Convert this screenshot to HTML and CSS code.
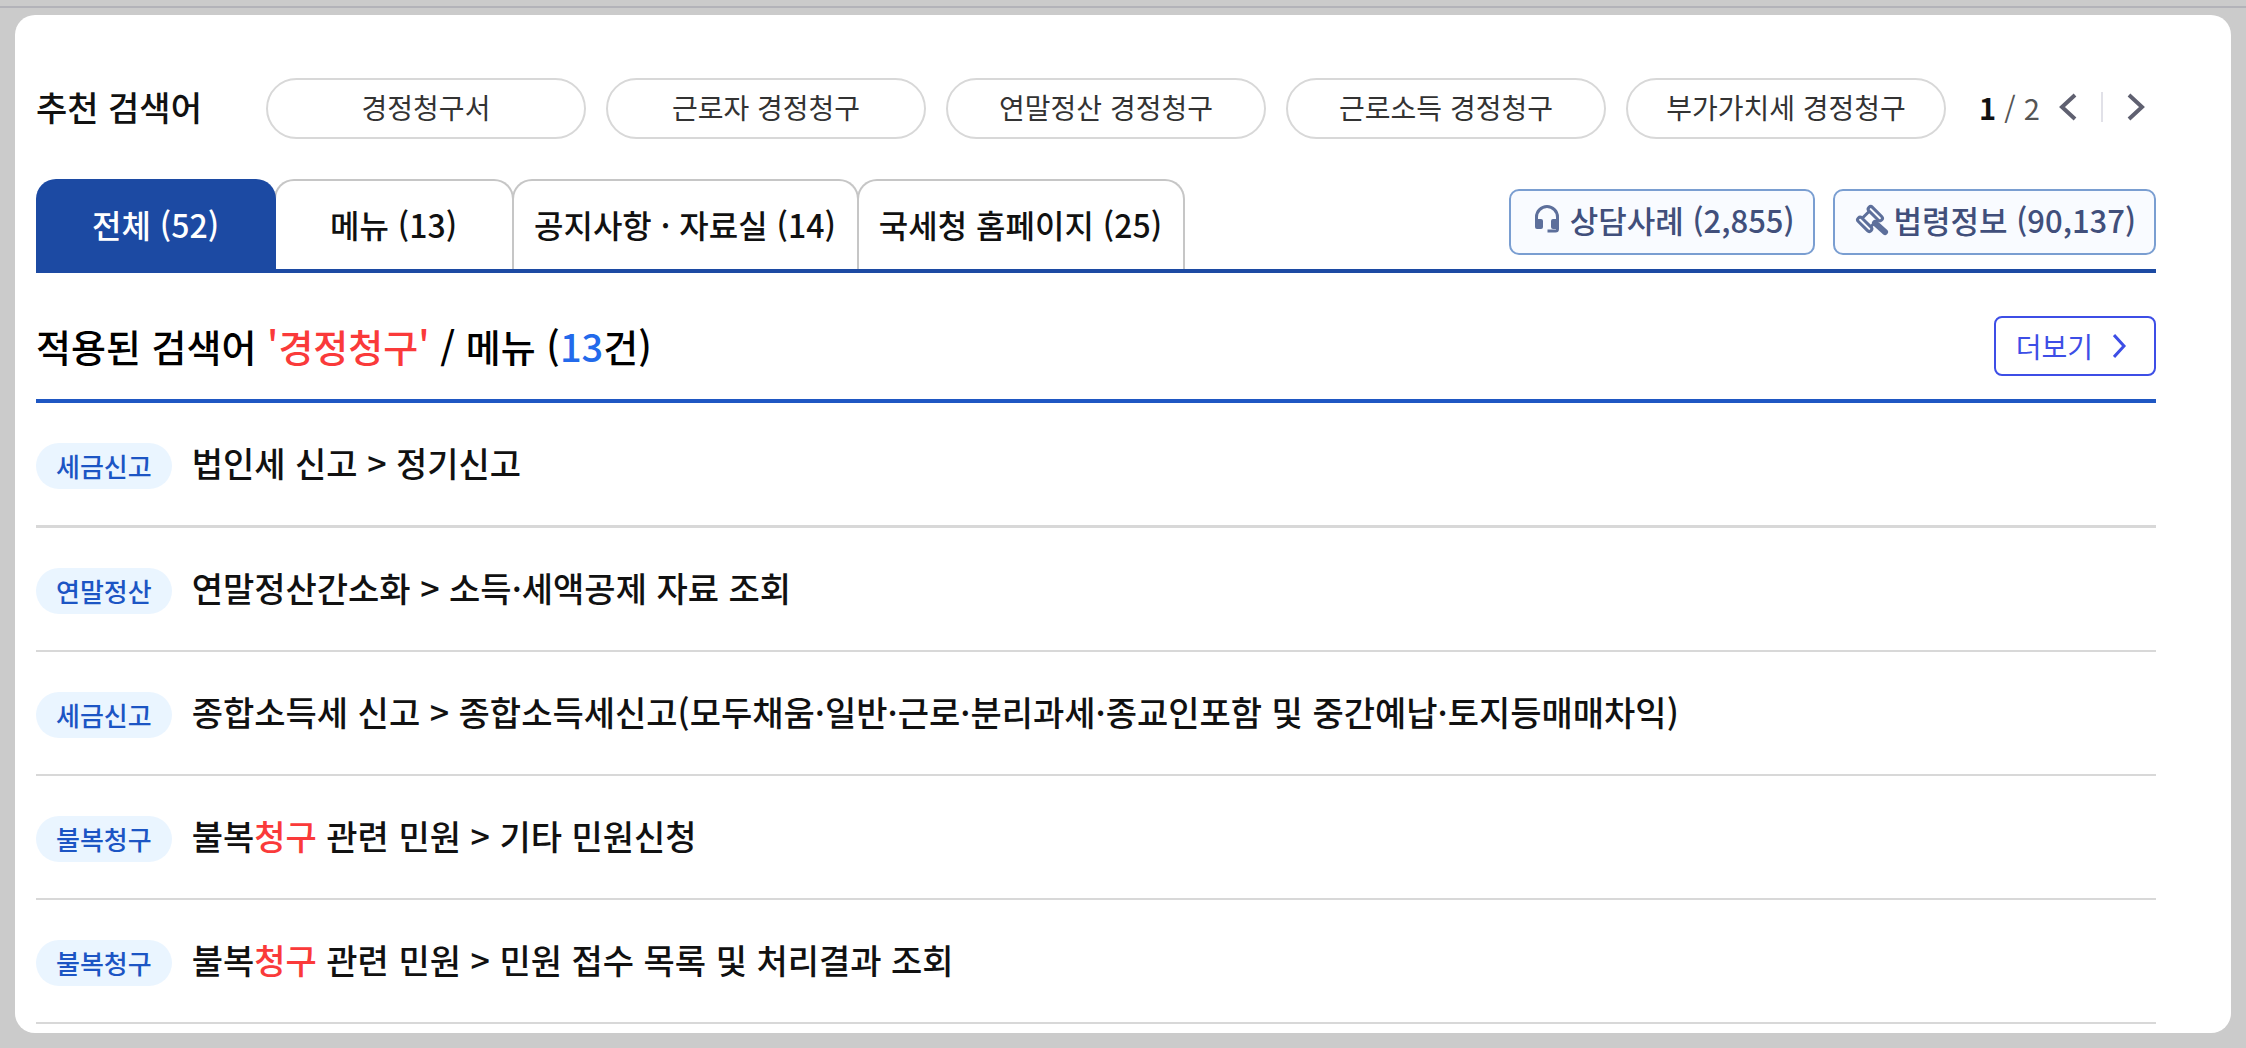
FILE: index.html
```
<!DOCTYPE html>
<html lang="ko">
<head>
  <meta charset="UTF-8">
  <meta name="viewport" content="width=device-width, initial-scale=1.0">
  <title>통합검색</title>
  <link rel="stylesheet" href="styles.css">
</head>
<body>
  <div class="top-line"></div>
  <main class="search-panel">
    <!-- 추천 검색어 -->
    <section class="keywords">
      <h2 class="keywords-title">추천 검색어</h2>
      <div class="keyword-list">
        <button type="button" class="keyword">경정청구서</button>
        <button type="button" class="keyword">근로자 경정청구</button>
        <button type="button" class="keyword">연말정산 경정청구</button>
        <button type="button" class="keyword">근로소득 경정청구</button>
        <button type="button" class="keyword">부가가치세 경정청구</button>
      </div>
      <div class="pager">
        <span class="pager-count"><strong>1</strong> / 2</span>
        <button type="button" class="pager-btn" aria-label="이전">
          <svg width="18" height="28" viewBox="0 0 18 28"><path d="M16 2 3 14l13 12"/></svg>
        </button>
        <span class="pager-divider"></span>
        <button type="button" class="pager-btn" aria-label="다음">
          <svg width="18" height="28" viewBox="0 0 18 28"><path d="M2 2l13 12L2 26"/></svg>
        </button>
      </div>
    </section>

    <!-- 탭 -->
    <nav class="tab-bar">
      <div class="tabs" role="tablist">
        <button type="button" class="tab active" role="tab" aria-selected="true">전체 (52)</button>
        <button type="button" class="tab" role="tab">메뉴 (13)</button>
        <button type="button" class="tab" role="tab">공지사항 · 자료실 (14)</button>
        <button type="button" class="tab" role="tab">국세청 홈페이지 (25)</button>
      </div>
      <div class="info-links">
        <a href="#" class="info-link">
          <svg width="36" height="36" viewBox="0 0 36 36">
            <path d="M7.5 20v-5a10.5 10.5 0 0 1 21 0v12q0 2-2 2h-8" class="line"/>
            <rect x="6" y="17" width="8" height="10" rx="2" class="fill"/>
            <rect x="22" y="17" width="8" height="10" rx="2" class="fill"/>
          </svg>
          상담사례 (2,855)
        </a>
        <a href="#" class="info-link">
          <svg width="36" height="36" viewBox="0 0 36 36">
            <g transform="translate(17 17) rotate(45)" class="line">
              <rect x="-9" y="-10" width="18" height="5" rx="2.5"/>
              <rect x="-9" y="5" width="18" height="5" rx="2.5"/>
              <path d="M-6-5v10M6-5v10"/>
            </g>
            <path d="M22 21l10 9" class="handle"/>
          </svg>
          법령정보 (90,137)
        </a>
      </div>
    </nav>

    <!-- 검색 결과 -->
    <section class="results">
      <div class="results-header">
        <h1>적용된 검색어 <em>'경정청구'</em> / 메뉴 (<span class="count">13</span>건)</h1>
        <a href="#" class="more">더보기
          <svg width="14" height="24" viewBox="0 0 14 24"><path d="M1 1l10 11L1 23"/></svg>
        </a>
      </div>
      <ul class="result-list">
        <li>
          <span class="badge">세금신고</span>
          <a href="#">법인세 신고 &gt; 정기신고</a>
        </li>
        <li>
          <span class="badge">연말정산</span>
          <a href="#">연말정산간소화 &gt; 소득·세액공제 자료 조회</a>
        </li>
        <li>
          <span class="badge">세금신고</span>
          <a href="#">종합소득세 신고 &gt; 종합소득세신고(모두채움·일반·근로·분리과세·종교인포함 및 중간예납·토지등매매차익)</a>
        </li>
        <li>
          <span class="badge">불복청구</span>
          <a href="#">불복<em>청구</em> 관련 민원 &gt; 기타 민원신청</a>
        </li>
        <li>
          <span class="badge">불복청구</span>
          <a href="#">불복<em>청구</em> 관련 민원 &gt; 민원 접수 목록 및 처리결과 조회</a>
        </li>
      </ul>
    </section>
  </main>
</body>
</html>
```
FILE: styles.css
```
* {
  box-sizing: border-box;
}

body {
  margin: 0;
  background: #cbcbcb;
  color: #111;
  font-family: "Noto Sans CJK KR", sans-serif;
  font-weight: 500;
}

h1, h2, ul {
  margin: 0;
  padding: 0;
}

button {
  padding: 0;
  background: none;
  border: none;
  color: inherit;
  font: inherit;
  cursor: pointer;
}

a {
  color: inherit;
  text-decoration: none;
}

em {
  color: #fa3a3a;
  font-style: normal;
}

svg {
  flex: none;
  fill: none;
}

.top-line {
  height: 8px;
  border-bottom: 2px solid #b3b3b9;
}

.search-panel {
  margin: 7px 15px 15px;
  padding: 63px 75px 9px 21px;
  background: #fff;
  border-radius: 20px;
}

/* 추천 검색어 */
.keywords {
  display: flex;
  align-items: center;
  margin-bottom: 40px;
}

.keywords-title {
  width: 230px;
  padding-bottom: 3px;
  font-size: 34px;
  font-weight: 500;
  line-height: 40px;
}

.keyword-list {
  display: flex;
  flex: 1;
  gap: 20px;
}

.keyword {
  flex: 1;
  height: 61px;
  padding-bottom: 3px;
  border: 2px solid #d8d8d8;
  border-radius: 31px;
  color: #333;
  font-size: 28px;
  font-weight: 400;
  white-space: nowrap;
}

.pager {
  display: flex;
  align-items: center;
  gap: 15px;
  width: 210px;
  padding: 0 2px 4px 33px;
  font-size: 29px;
  line-height: 40px;
}

.pager-count {
  margin-right: auto;
  color: #555;
  font-weight: 400;
  white-space: nowrap;
}

.pager-count strong {
  color: #111;
}

.pager-btn {
  display: flex;
  align-items: center;
  justify-content: center;
  width: 36px;
  height: 40px;
}

.pager-count + .pager-btn {
  margin-left: -15px;
}

.pager-btn svg {
  stroke: #5f6070;
  stroke-width: 4;
}

.pager-divider {
  width: 2px;
  height: 30px;
  background: #e1e1e8;
}

/* 탭 */
.tab-bar {
  display: flex;
  justify-content: space-between;
  align-items: flex-end;
  border-bottom: 4px solid #1c4aa3;
}

.tabs {
  display: flex;
}

.tab {
  min-width: 240px;
  height: 90px;
  margin-right: -2px;
  padding: 0 21px 3px 20px;
  border: 2px solid #c6c6c6;
  border-bottom: none;
  border-radius: 20px 20px 0 0;
  font-size: 32px;
  white-space: nowrap;
}

.tab.active {
  z-index: 1;
  background: #1c4aa3;
  border-color: #1c4aa3;
  color: #fff;
}

.info-links {
  display: flex;
  gap: 18px;
  margin-bottom: 14px;
}

.info-link {
  display: flex;
  align-items: center;
  gap: 5px;
  height: 66px;
  padding: 0 18px 5px;
  background: #f9fbff;
  border: 2px solid #7a9ed1;
  border-radius: 10px;
  color: #414f7b;
  font-size: 31px;
}

.info-link .line {
  stroke: #5d6f9b;
  stroke-width: 3;
}

.info-link .fill {
  fill: #5d6f9b;
}

.info-link .handle {
  stroke: #5d6f9b;
  stroke-width: 6;
  stroke-linecap: round;
}

/* 검색 결과 */
.results-header {
  display: flex;
  justify-content: space-between;
  align-items: center;
  padding: 43px 0 23px;
  border-bottom: 4px solid #1f57c3;
}

.results-header h1 {
  color: #000;
  font-size: 38px;
  font-weight: 500;
  line-height: 60px;
}

.count {
  color: #236aeb;
}

.more {
  display: flex;
  align-items: center;
  gap: 20px;
  height: 60px;
  padding: 0 27px 0 20px;
  border: 2px solid #3d4ee6;
  border-radius: 8px;
  color: #3d4ee6;
  font-size: 28px;
  font-weight: 400;
}

.more svg {
  stroke: #3d4ee6;
  stroke-width: 3;
}

.result-list {
  list-style: none;
}

.result-list li {
  display: flex;
  align-items: flex-start;
  gap: 20px;
  padding: 40px 0 36px;
  border-bottom: 2px solid #d8d8d8;
  font-size: 34px;
  line-height: 40px;
}

.result-list li:first-child {
  border-bottom-width: 3px;
}

.badge {
  padding: 0 20px;
  background: #eaf5ff;
  border-radius: 23px;
  color: #1c55c4;
  font-size: 26px;
  line-height: 46px;
}
```
